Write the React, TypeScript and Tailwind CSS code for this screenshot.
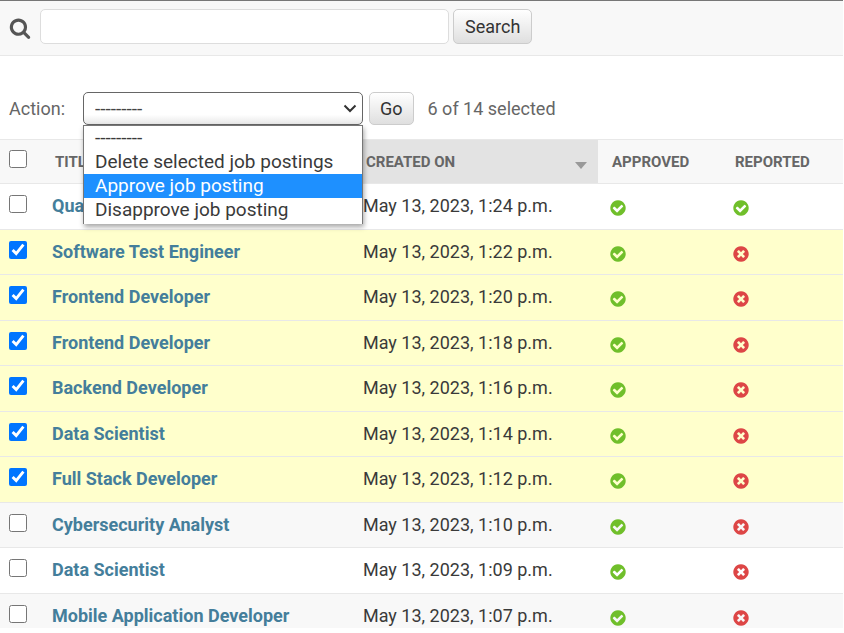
import { useState } from "react";

type Job = { title: string; created: string; reported: boolean };

const jobs: Job[] = [
  { title: "Quality Engineer", created: "May 13, 2023, 1:24 p.m.", reported: true },
  { title: "Software Test Engineer", created: "May 13, 2023, 1:22 p.m.", reported: false },
  { title: "Frontend Developer", created: "May 13, 2023, 1:20 p.m.", reported: false },
  { title: "Frontend Developer", created: "May 13, 2023, 1:18 p.m.", reported: false },
  { title: "Backend Developer", created: "May 13, 2023, 1:16 p.m.", reported: false },
  { title: "Data Scientist", created: "May 13, 2023, 1:14 p.m.", reported: false },
  { title: "Full Stack Developer", created: "May 13, 2023, 1:12 p.m.", reported: false },
  { title: "Cybersecurity Analyst", created: "May 13, 2023, 1:10 p.m.", reported: false },
  { title: "Data Scientist", created: "May 13, 2023, 1:09 p.m.", reported: false },
  { title: "Mobile Application Developer", created: "May 13, 2023, 1:07 p.m.", reported: false },
];

const actions = [
  "---------",
  "Delete selected job postings",
  "Approve job posting",
  "Disapprove job posting",
];

function StatusIcon({ ok }: { ok: boolean }) {
  return ok ? (
    <svg viewBox="0 0 1792 1792" className="block size-[18px]" role="img" aria-label="True">
      <path
        fill="#70bf2b"
        d="M1412 734q0-28-18-46l-91-90q-19-19-45-19t-45 19l-408 407-226-226q-19-19-45-19t-45 19l-91 90q-18 18-18 46 0 27 18 45l362 362q19 19 45 19 27 0 46-19l543-543q18-18 18-45zm252 162q0 209-103 385.500t-279.500 279.500-385.500 103-385.500-103-279.500-279.500-103-385.500 103-385.500 279.500-279.500 385.500-103 385.500 103 279.500 279.500 103 385.500z"
      />
    </svg>
  ) : (
    <svg viewBox="0 0 1792 1792" className="block size-[18px]" role="img" aria-label="False">
      <path
        fill="#dd4646"
        d="M1277 1122q0-26-19-45l-181-181 181-181q19-19 19-45 0-27-19-46l-90-90q-19-19-46-19-26 0-45 19l-181 181-181-181q-19-19-45-19-27 0-46 19l-90 90q-19 19-19 46 0 26 19 45l181 181-181 181q-19 19-19 45 0 27 19 46l90 90q19 19 46 19 26 0 45-19l181-181 181 181q19 19 45 19 27 0 46-19l90-90q19-19 19-46zm387-226q0 209-103 385.500t-279.500 279.500-385.500 103-385.500-103-279.500-279.500-103-385.500 103-385.500 279.500-279.500 385.500-103 385.500 103 279.500 279.500 103 385.500z"
      />
    </svg>
  );
}

const buttonStyle =
  "rounded-[5px] border border-[#ccc] bg-linear-to-b from-white to-[#dfdfdf] text-lg leading-5 text-[#333]";

export default function App() {
  const [selected, setSelected] = useState<number[]>([1, 2, 3, 4, 5, 6]);
  const toggle = (i: number) =>
    setSelected((s) => (s.includes(i) ? s.filter((n) => n !== i) : [...s, i]));

  return (
    <main className="bg-white pr-px font-['Roboto',sans-serif] text-lg text-[#3a3a3a]">
      <form
        role="search"
        onSubmit={(e) => e.preventDefault()}
        className="flex items-start border-t border-b border-t-[#777] border-b-[#e8e8e8] bg-[#f8f8f8] pt-2 pb-[11px] pl-[9px]"
      >
        <label htmlFor="searchbar" className="mt-2 mr-[9px] block">
          <svg viewBox="0 0 1792 1792" className="size-[22px]" role="img" aria-label="Search">
            <path
              fill="#555"
              d="M1216 832q0-185-131.500-316.500t-316.500-131.500-316.500 131.500-131.500 316.500 131.500 316.500 316.500 131.500 316.500-131.500 131.500-316.500zm512 832q0 52-38 90t-90 38q-54 0-90-38l-343-342q-179 124-399 124-143 0-273.500-55.500t-225-150-150-225-55.500-273.500 55.500-273.500 150-225 225-150 273.500-55.500 273.500 55.500 225 150 150 225 55.500 273.500q0 220-124 399l343 343q37 37 37 90z"
            />
          </svg>
        </label>
        <input
          id="searchbar"
          type="text"
          className="h-[35px] w-[409px] rounded-[5px] border border-[#ddd] bg-white px-2 outline-none"
        />
        <button type="submit" className={`ml-1 h-[35px] px-[11px] ${buttonStyle}`}>
          Search
        </button>
      </form>

      <div className="flex items-center pt-9 pb-3.5 pl-[9px] text-[#666]">
        <label htmlFor="action" className="w-[74px]">
          Action:
        </label>
        <div className="relative h-[33px] w-[280px]">
          <select
            id="action"
            className="h-full w-full appearance-none rounded-[5px] border border-[#666] bg-white bg-linear-to-b from-white from-70% to-[#e8e8e8] pl-[11px] text-[19px] text-[#444] outline-none"
          >
            {actions.map((a) => (
              <option key={a}>{a}</option>
            ))}
          </select>
          <svg
            viewBox="0 0 14 9"
            className="pointer-events-none absolute top-3 right-1.5 h-[9px] w-3.5"
            fill="none"
            stroke="#333"
            strokeWidth="2"
            aria-hidden="true"
          >
            <path d="M1.500 1.500 7 7l5.500-5.500" />
          </svg>
          <ul
            role="listbox"
            aria-label="Action choices"
            className="absolute top-full left-0 z-10 w-full border border-b-0 border-[#777] bg-white pb-0.5 text-[19px] leading-6 text-[#3a3a3a] shadow-[1px_3px_5px_rgba(0,0,0,0.35)]"
          >
            {actions.map((a, i) => (
              <li
                key={a}
                role="option"
                aria-selected={i === 2}
                className={`pl-[11px] ${i === 2 ? "bg-[#1e90ff] text-white" : ""}`}
              >
                {a}
              </li>
            ))}
          </ul>
        </div>
        <button type="button" className={`ml-1.5 h-[33px] px-2.5 ${buttonStyle}`}>
          Go
        </button>
        <span className="ml-3.5">{selected.length} of 14 selected</span>
      </div>

      <table className="w-full table-fixed border-separate border-spacing-0 text-left">
        <colgroup>
          <col className="w-[42px]" />
          <col className="w-[311px]" />
          <col className="w-[245px]" />
          <col className="w-[123px]" />
          <col />
        </colgroup>
        <thead className="text-[15px] leading-6 text-[#666] uppercase">
          <tr className="h-[45px] bg-[#f8f8f8] *:border-y *:border-[#e8e8e8]">
            <th className="pt-2.5 pl-[9px] align-top">
              <input
                type="checkbox"
                aria-label="Select all"
                checked={selected.length === jobs.length}
                onChange={(e) => setSelected(e.target.checked ? jobs.map((_, i) => i) : [])}
                className="block size-[18px]"
              />
            </th>
            <th className="pl-[13px]">Title</th>
            <th className="bg-[#e3e3e3] pl-[13px]">
              <div className="flex items-center justify-between pr-[11px]">
                Created on
                <svg viewBox="0 0 12 7" className="mt-2 h-[7px] w-3" aria-hidden="true">
                  <path fill="#999" d="M0 0h12L6 7z" />
                </svg>
              </div>
            </th>
            <th className="pl-3.5">Approved</th>
            <th className="pl-3.5">Reported</th>
          </tr>
        </thead>
        <tbody className="leading-6">
          {jobs.map((job, i) => {
            const on = selected.includes(i);
            return (
              <tr
                key={job.created}
                className={`h-[45px] odd:h-[46px] last:h-[34px] *:border-b *:border-[#e8e8e8] *:align-top last:*:border-b-0 ${
                  on ? "bg-[#ffffcc]" : i % 2 ? "bg-[#f8f8f8]" : "bg-white"
                }`}
              >
                <td className="pt-[11px] pl-[9px]">
                  <input
                    type="checkbox"
                    aria-label={`Select ${job.title}`}
                    checked={on}
                    onChange={() => toggle(i)}
                    className="block size-[18px]"
                  />
                </td>
                <th scope="row" className="pt-2.5 pl-2.5 font-bold">
                  <a href="#job" className="text-[#447e9b]">
                    {job.title}
                  </a>
                </th>
                <td className="pt-2.5 pl-2.5">{job.created}</td>
                <td className="pt-[15px] pl-[11px]">
                  <StatusIcon ok />
                </td>
                <td className="pt-[15px] pl-[11px]">
                  <StatusIcon ok={job.reported} />
                </td>
              </tr>
            );
          })}
        </tbody>
      </table>
    </main>
  );
}
